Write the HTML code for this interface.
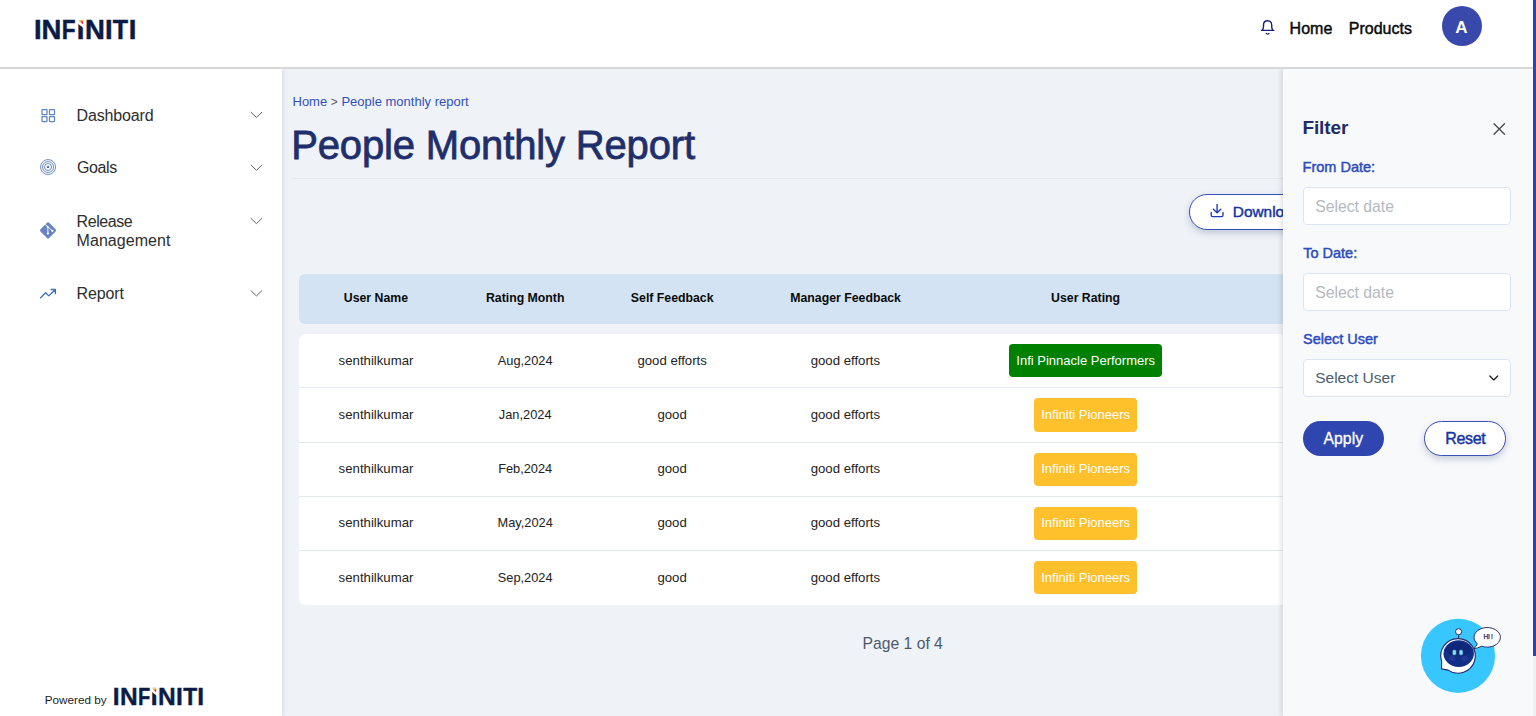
<!DOCTYPE html>
<html lang="en">
<head>
<meta charset="utf-8">
<title>People Monthly Report</title>
<style>
*{box-sizing:border-box;margin:0;padding:0}
html,body{width:1536px;height:716px;overflow:hidden;background:#eff3f8;font-family:"Liberation Sans",sans-serif;color:#222}
.t{position:absolute;white-space:nowrap;line-height:1;z-index:6}
.md{-webkit-text-stroke:0.45px currentColor}
#hdr{position:absolute;left:0;top:0;width:1533px;height:69px;background:#fff;border-bottom:2px solid #d7d7d7;z-index:5}
.logo{font-weight:700;color:#0c1b45}
#avatar{position:absolute;left:1441.5px;top:6.2px;width:40px;height:40px;border-radius:50%;background:#3949ab;z-index:6}
#sbtrack{position:absolute;left:1533px;top:0;width:3px;height:716px;background:#f1f1f1;z-index:9}
#sbthumb{position:absolute;left:1533px;top:0;width:3px;height:656px;background:#2a45b2;z-index:10}
#side{position:absolute;left:0;top:69px;width:282px;height:647px;background:#fff;box-shadow:1px 0 5px rgba(0,0,0,.11);z-index:4}
.mi{color:#2d2d2d}
svg{position:absolute;z-index:6;overflow:visible}
#hr{position:absolute;left:292px;top:177.5px;width:992px;height:1px;background:#e4e7ed}
#dl{position:absolute;left:1188.5px;top:193.8px;width:180px;height:36px;border:1px solid #3a4eb8;border-radius:18px;background:#fff;box-shadow:0 3px 7px rgba(70,80,130,.28);z-index:1}
#thead{position:absolute;left:298.8px;top:273.8px;width:1000px;height:50px;background:#d3e3f4;border-radius:6px 0 0 6px}
.th{font-weight:700;color:#0a0a0a;transform:translateX(-50%)}
#tbody{position:absolute;left:298.8px;top:333.5px;width:1000px;height:271px;background:#fff;border-radius:7px 0 0 7px}
.rl{position:absolute;left:298.8px;width:1000px;height:1px;background:#e4e9f1}
.td{color:#222;transform:translateX(-50%)}
.bdg{position:absolute;height:33.2px;border-radius:4px}
.g{background:#008000;left:1009.2px;width:152.9px}
.y{background:#fec12c;left:1034.1px;width:103.1px}
.bt{color:#fff;transform:translateX(-50%)}
#flt{position:absolute;left:1282.8px;top:69px;width:250.2px;height:647px;background:#f7f9fb;box-shadow:-2px 0 5px rgba(0,0,0,.12);z-index:3}
.fl{color:#2c4bbc}
.fi{position:absolute;left:1303px;width:207.6px;height:37.3px;background:#fff;border:1px solid #dbe5f2;border-radius:4px;z-index:5}
.ph{color:#b4b9c0}
#apply{position:absolute;left:1302.8px;top:420.7px;width:81.3px;height:35.2px;border-radius:18px;background:#2f45b0;z-index:5}
#reset{position:absolute;left:1423.6px;top:420.7px;width:82.5px;height:35.2px;border-radius:18px;background:#fff;border:1px solid #3a4eb8;z-index:5;box-shadow:0 3px 7px rgba(70,80,130,.28)}
</style>
</head>
<body>
<!-- HEADER -->
<div id="hdr"></div>
<svg id="ov1" width="1536" height="716" viewBox="0 0 1536 716" style="left:0;top:0;z-index:7;pointer-events:none">
<defs>
<linearGradient id="acc" x1="0" y1="0" x2="1" y2="1"><stop offset="0" stop-color="#fdb813"/><stop offset="0.45" stop-color="#f7941d"/><stop offset="0.7" stop-color="#e3173e"/><stop offset="1" stop-color="#e3173e"/></linearGradient>
</defs>
<text id="logo1" y="39.3" font-family="Liberation Sans, sans-serif" font-weight="700" font-size="27.5" fill="#0c1b45" stroke="#0c1b45" stroke-width="0.5"><tspan x="34 41.6">IN</tspan><tspan x="61.85" textLength="13.8" lengthAdjust="spacingAndGlyphs">F</tspan><tspan x="76.7 85 105.1">INI</tspan><tspan x="112.87" textLength="15.3" lengthAdjust="spacingAndGlyphs">T</tspan><tspan x="128.7">I</tspan></text>
<polygon points="77,19 84.2,19 84.2,28.4 77,23.1" fill="#fff"/>
<polygon points="78.4,20.2 82.9,20.2 82.9,24.6" fill="url(#acc)"/>
</svg>
<svg width="16" height="18" viewBox="1260 19 16 18" style="left:1260px;top:19px">
<path d="M1261.4 30.4H1273.8M1262.3 30.1C1263.2 29 1263.5 27.8 1263.5 26.4V25C1263.5 22.4 1265.2 20.7 1267.6 20.7C1270 20.7 1271.7 22.4 1271.7 25V26.4C1271.7 27.8 1272 29 1272.9 30.1" fill="none" stroke="#1a1f7c" stroke-width="1.4" stroke-linecap="round" stroke-linejoin="round"/>
<path d="M1266.2 33.4Q1267.6 34.9 1269 33.4" fill="none" stroke="#1a1f7c" stroke-width="1.25" stroke-linecap="round"/>
</svg>
<div class="t md" id="nHome" style="left:1289.6px;top:21px;font-size:16px;color:#0a0a0a;">Home</div>
<div class="t md" id="nProd" style="left:1348.8px;top:21px;font-size:16px;color:#0a0a0a;">Products</div>
<div id="avatar"></div>
<div class="t" id="avA" style="left:1461.5px;top:19px;font-size:17px;color:#fff;font-weight:700;transform:translateX(-50%);">A</div>
<div id="sbtrack"></div><div id="sbthumb"></div>
<!-- SIDEBAR -->
<div id="side"></div>
<svg width="282" height="647" viewBox="0 69 282 647" style="left:0;top:69px">
<g fill="none" stroke="#5f86ca" stroke-width="1.25">
<rect x="42" y="109.6" width="5" height="5" rx="0.4"/><rect x="49.5" y="109.6" width="5" height="5" rx="0.4"/>
<rect x="42" y="116.5" width="5" height="5" rx="0.4"/><rect x="49.5" y="116.5" width="5" height="5" rx="0.4"/>
</g>
<g fill="none" stroke="#6380c3" stroke-width="0.95" opacity="0.95">
<circle cx="48.05" cy="167.05" r="7.5"/><circle cx="48.05" cy="167.05" r="5.5"/><circle cx="48.05" cy="167.05" r="3.5" stroke-width="1"/>
</g>
<circle cx="48.05" cy="167.05" r="1.25" fill="#4f76bd"/>
<rect x="41.95" y="224.25" width="12.2" height="12.2" rx="1.5" transform="rotate(45 48.05 230.35)" fill="#6684c5"/>
<path d="M45.3 224.6L52.2 230.6M47.9 227.2V233.2" stroke="#fff" stroke-width="1" fill="none" stroke-linecap="round" opacity="0.92"/>
<circle cx="47.9" cy="233.6" r="1.15" fill="#fff"/><circle cx="52.4" cy="230.8" r="1.15" fill="#fff"/><circle cx="47.6" cy="226.7" r="0.9" fill="#fff"/>
<path d="M40.6 297.7L45.6 292.8L48.8 295.9L55.2 289.7M51.2 289.5H55.4V293.7" fill="none" stroke="#3f6db6" stroke-width="1.3" stroke-linecap="round" stroke-linejoin="round"/>
<g fill="none" stroke="#5a5a5a" stroke-width="0.95" stroke-linecap="round" stroke-linejoin="round">
<path d="M251.1 112.3L256.45 117.4L261.8 112.3"/>
<path d="M251.1 165.2L256.45 170.3L261.8 165.2"/>
<path d="M251.1 218.5L256.45 223.6L261.8 218.5"/>
<path d="M251.1 290.8L256.45 295.9L261.8 290.8"/>
</g>
</svg>
<div class="t mi" style="left:76.6px;top:108px;font-size:16px;letter-spacing:-0.15px;">Dashboard</div>
<div class="t mi" style="left:76.9px;top:160px;font-size:16px;letter-spacing:-0.35px;">Goals</div>
<div class="t mi" style="left:76.6px;top:214px;font-size:16px;letter-spacing:-0.45px;">Release</div>
<div class="t mi" style="left:76.6px;top:233px;font-size:16px;letter-spacing:0.05px;">Management</div>
<div class="t mi" style="left:76.6px;top:286px;font-size:16px;letter-spacing:-0.15px;">Report</div>
<div class="t" id="pby" style="left:44.8px;top:694px;font-size:11.7px;color:#1c1c1c;">Powered by</div>
<svg id="ov2" width="110" height="36" viewBox="108 680 110 36" style="left:108px;top:680px;z-index:7">
<text id="logo2" y="705.4" font-family="Liberation Sans, sans-serif" font-weight="700" font-size="24.5" fill="#0c1b45" stroke="#0c1b45" stroke-width="0.4"><tspan x="112.66 119.96">IN</tspan><tspan x="137.96" textLength="12.27" lengthAdjust="spacingAndGlyphs">F</tspan><tspan x="150.66 158.06 175.96">INI</tspan><tspan x="183.14" textLength="13.92" lengthAdjust="spacingAndGlyphs">T</tspan><tspan x="197.26">I</tspan></text>
<polygon points="151,687.6 157.2,687.6 157.2,695.9 151,691.3" fill="#fff"/>
<polygon points="152.2,688.6 156.2,688.6 156.2,692.4" fill="url(#acc)"/>
</svg>
<!-- MAIN -->
<div class="t" id="crumb" style="left:292.5px;top:95px;font-size:13px;color:#3350b8;z-index:1;">Home <span style="color:#5a5a5a;font-size:12px">&gt;</span> People monthly report</div>
<div class="t" id="title" style="left:291.2px;top:125px;font-size:40px;color:#1f2f6b;z-index:1;-webkit-text-stroke:0.8px #1f2f6b;letter-spacing:-0.15px;">People Monthly Report</div>
<div id="hr"></div>
<div id="dl"></div>
<svg width="18" height="18" viewBox="1208 201 18 18" style="left:1208px;top:201px;z-index:2">
<path d="M1217.1 204.3V212.3M1213.4 209.3L1217.1 212.7L1220.8 209.3M1211.2 212.4V215.2Q1211.2 216.6 1212.6 216.6H1221.6Q1223 216.6 1223 215.2V212.4" fill="none" stroke="#1a3ab0" stroke-width="1.35" stroke-linecap="round" stroke-linejoin="round"/>
</svg>
<div class="t md" id="dlt" style="left:1232.8px;top:204px;font-size:15.4px;color:#1535a3;z-index:2;">Download</div>
<!-- TABLE -->
<div id="thead"></div>
<div class="t th" style="left:375.9px;top:292px;font-size:12.3px;z-index:1;">User Name</div>
<div class="t th" style="left:525.2px;top:292px;font-size:12.3px;z-index:1;">Rating Month</div>
<div class="t th" style="left:672.2px;top:292px;font-size:12.3px;z-index:1;">Self Feedback</div>
<div class="t th" style="left:845.6px;top:292px;font-size:12.3px;z-index:1;">Manager Feedback</div>
<div class="t th" style="left:1085.6px;top:292px;font-size:12.3px;z-index:1;">User Rating</div>
<div id="tbody"></div>
<div class="t td" style="left:376px;top:354px;font-size:13.2px;z-index:1;">senthilkumar</div>
<div class="t td" style="left:525.2px;top:355px;font-size:12.8px;z-index:1;">Aug,2024</div>
<div class="t td" style="left:672.1px;top:354px;font-size:13.2px;z-index:1;">good efforts</div>
<div class="t td" style="left:845.4px;top:354px;font-size:13.2px;z-index:1;">good efforts</div>
<div class="bdg g" style="top:344.2px"></div>
<div class="t bt" style="left:1085.7px;top:354px;font-size:13px;z-index:1;">Infi Pinnacle Performers</div>
<div class="rl" style="top:387.4px"></div>
<div class="t td" style="left:376px;top:408px;font-size:13.2px;z-index:1;">senthilkumar</div>
<div class="t td" style="left:525.2px;top:409px;font-size:12.8px;z-index:1;">Jan,2024</div>
<div class="t td" style="left:672.1px;top:408px;font-size:13.2px;z-index:1;">good</div>
<div class="t td" style="left:845.4px;top:408px;font-size:13.2px;z-index:1;">good efforts</div>
<div class="bdg y" style="top:398.4px"></div>
<div class="t bt" style="left:1085.7px;top:408px;font-size:13px;z-index:1;">Infiniti Pioneers</div>
<div class="rl" style="top:441.6px"></div>
<div class="t td" style="left:376px;top:462px;font-size:13.2px;z-index:1;">senthilkumar</div>
<div class="t td" style="left:525.2px;top:463px;font-size:12.8px;z-index:1;">Feb,2024</div>
<div class="t td" style="left:672.1px;top:462px;font-size:13.2px;z-index:1;">good</div>
<div class="t td" style="left:845.4px;top:462px;font-size:13.2px;z-index:1;">good efforts</div>
<div class="bdg y" style="top:452.6px"></div>
<div class="t bt" style="left:1085.7px;top:462px;font-size:13px;z-index:1;">Infiniti Pioneers</div>
<div class="rl" style="top:495.8px"></div>
<div class="t td" style="left:376px;top:516px;font-size:13.2px;z-index:1;">senthilkumar</div>
<div class="t td" style="left:525.2px;top:517px;font-size:12.8px;z-index:1;">May,2024</div>
<div class="t td" style="left:672.1px;top:516px;font-size:13.2px;z-index:1;">good</div>
<div class="t td" style="left:845.4px;top:516px;font-size:13.2px;z-index:1;">good efforts</div>
<div class="bdg y" style="top:506.8px"></div>
<div class="t bt" style="left:1085.7px;top:516px;font-size:13px;z-index:1;">Infiniti Pioneers</div>
<div class="rl" style="top:550.0px"></div>
<div class="t td" style="left:376px;top:571px;font-size:13.2px;z-index:1;">senthilkumar</div>
<div class="t td" style="left:525.2px;top:572px;font-size:12.8px;z-index:1;">Sep,2024</div>
<div class="t td" style="left:672.1px;top:571px;font-size:13.2px;z-index:1;">good</div>
<div class="t td" style="left:845.4px;top:571px;font-size:13.2px;z-index:1;">good efforts</div>
<div class="bdg y" style="top:561.0px"></div>
<div class="t bt" style="left:1085.7px;top:571px;font-size:13px;z-index:1;">Infiniti Pioneers</div>
<div class="t" id="pg" style="left:862.6px;top:636px;font-size:15.7px;color:#4b5a6b;z-index:1;">Page 1 of 4</div>
<!-- FILTER -->
<div id="flt"></div>
<div class="t" id="fttl" style="left:1302.4px;top:118px;font-size:19px;font-weight:700;color:#1d2c68;letter-spacing:-0.1px;">Filter</div>
<svg width="16" height="16" viewBox="1491 121 16 16" style="left:1491px;top:121px">
<path d="M1494 123.8L1504.5 134.3M1504.5 123.8L1494 134.3" stroke="#484848" stroke-width="1.3" stroke-linecap="round"/>
</svg>
<div class="t fl md" style="left:1302.6px;top:160px;font-size:14.5px;">From Date:</div>
<div class="fi" style="top:187.3px"></div>
<div class="t ph" style="left:1315.2px;top:199px;font-size:15.75px;">Select date</div>
<div class="t fl md" style="left:1303.2px;top:246px;font-size:14.5px;">To Date:</div>
<div class="fi" style="top:273.4px"></div>
<div class="t ph" style="left:1315.2px;top:285px;font-size:15.75px;">Select date</div>
<div class="t fl md" style="left:1303px;top:332px;font-size:14.5px;">Select User</div>
<div class="fi" style="top:359.3px"></div>
<div class="t" id="selt" style="left:1315.2px;top:370px;font-size:15.5px;color:#4d5c6c;">Select User</div>
<svg width="14" height="10" viewBox="1487 373 14 10" style="left:1487px;top:373px">
<path d="M1489.9 376L1493.8 379.9L1497.7 376" fill="none" stroke="#222" stroke-width="1.35" stroke-linecap="round" stroke-linejoin="round"/>
</svg>
<div id="apply"></div>
<div class="t" id="applyt" style="left:1343.3px;top:431px;font-size:15.8px;color:#fff;-webkit-text-stroke:0.3px #fff;transform:translateX(-50%);">Apply</div>
<div id="reset"></div>
<div class="t md" id="resett" style="left:1465.3px;top:431px;font-size:16px;color:#1535a3;letter-spacing:-0.35px;transform:translateX(-50%);">Reset</div>
<svg width="90" height="80" viewBox="1416 616 90 80" style="left:1416px;top:616px">
<circle cx="1458" cy="655.8" r="37.1" fill="#38c6ff"/>
<path d="M1458.6 634.6V638.8" stroke="#232868" stroke-width="1.05"/>
<circle cx="1458.6" cy="631.7" r="3.05" fill="#fbfdff" stroke="#232868" stroke-width="0.95"/>
<path d="M1441.6 661.4L1441.5 668.9L1448.1 670.1A17.3 17.3 0 1 0 1441.6 661.4Z" fill="#fff" stroke="#232868" stroke-width="1.1" stroke-linejoin="round"/>
<ellipse cx="1458.7" cy="653.6" rx="15.2" ry="13.3" fill="#112f86"/>
<ellipse cx="1458.7" cy="649.5" rx="12" ry="7.2" fill="#0c2572" opacity="0.55"/>
<ellipse cx="1452" cy="658.6" rx="3.4" ry="2.5" fill="#2b3c9c" opacity="0.65"/><ellipse cx="1464.6" cy="658.6" rx="3.4" ry="2.5" fill="#2b3c9c" opacity="0.65"/>
<rect x="1452.3" y="649.8" width="4.1" height="5.4" rx="1.3" fill="#86dbff" stroke="#0a1c5e" stroke-width="0.6"/><rect x="1459" y="649.8" width="4.1" height="5.4" rx="1.3" fill="#86dbff" stroke="#0a1c5e" stroke-width="0.6"/>
<path d="M1473.4 648.8Q1476.4 646.7 1477.3 643.8A13.2 9.8 0 1 1 1481.6 646.2Q1477.6 648.3 1473.4 648.8Z" fill="#fff" stroke="#232868" stroke-width="0.95" stroke-linejoin="round"/>
<text x="1483.5 1488 1491" y="639.1" font-family="Liberation Sans, sans-serif" font-size="6.5" fill="#20245f" stroke="#20245f" stroke-width="0.25">HI!</text>
</svg>
</body>
</html>
